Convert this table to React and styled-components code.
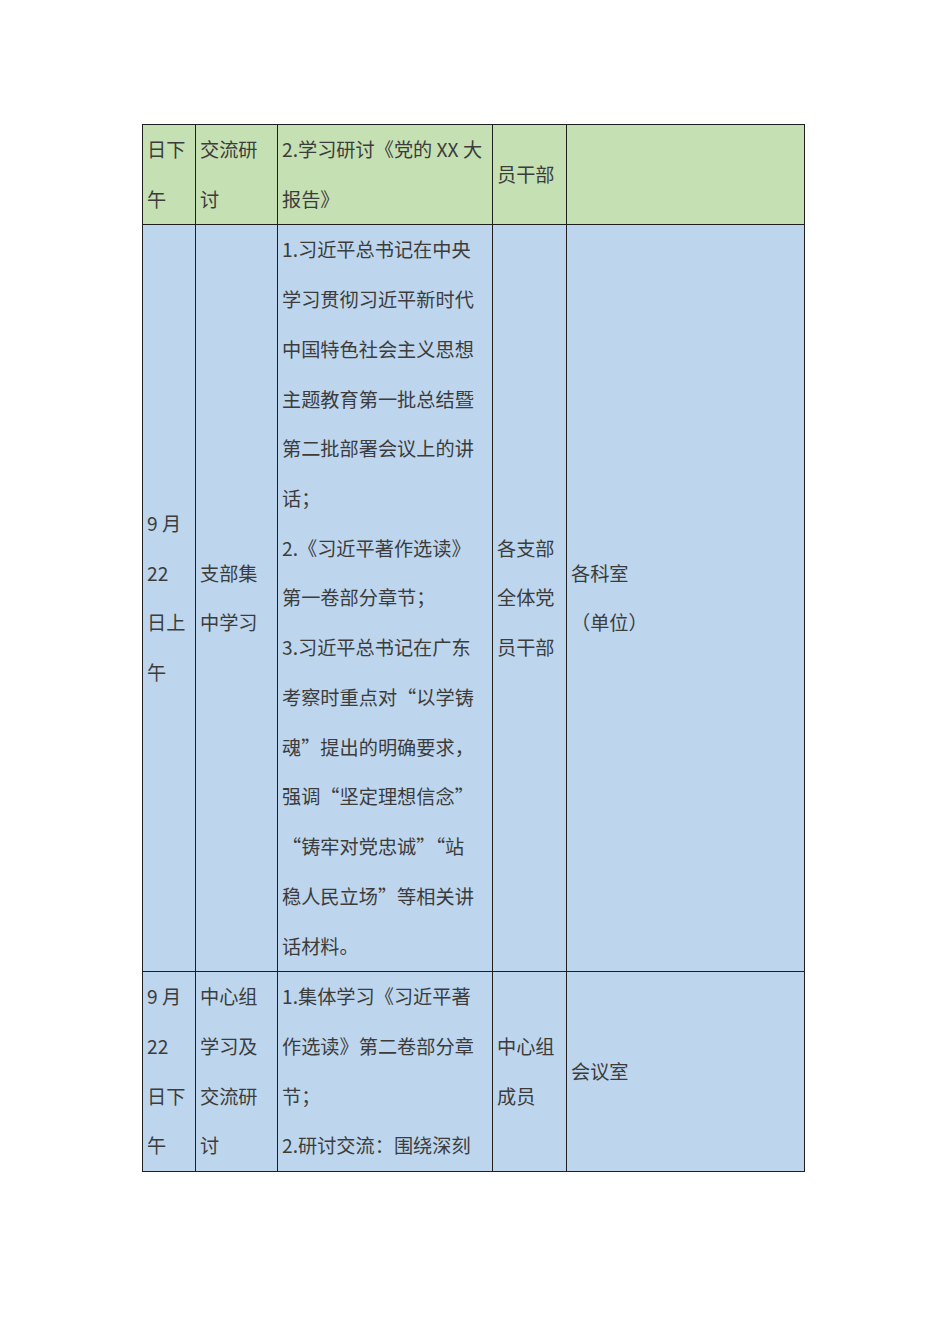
import styled, { createGlobalStyle } from 'styled-components';

const GlobalStyle = createGlobalStyle`
  html, body {
    margin: 0;
    padding: 0;
    background: #ffffff;
  }
  body {
    font-family: "Noto Sans CJK SC", "Noto Sans", sans-serif;
  }
`;

const Page = styled.div`
  width: 950px;
  min-height: 1344px;
  padding: 124px 0 0 142px;
  box-sizing: border-box;
`;

const Table = styled.table`
  border-collapse: collapse;
  table-layout: fixed;
  width: 662px;
  font-size: 19.2px;
  color: #3c3c3c;
`;

const Row = styled.tr`
  background: ${props => (props.$tone === 'green' ? '#c5e0b3' : '#bdd6ee')};
`;

const Cell = styled.td`
  border: 1px solid #1f1f1f;
  padding: 0 4px 0 4px;
  vertical-align: middle;
  line-height: 49.72px;
  white-space: nowrap;
  overflow: hidden;
`;

const Line = styled.div`
  height: 49.72px;
`;

const widths = [53, 82, 215, 74, 238];

const rows = [
  {
    tone: 'green',
    cells: [
      ['日下', '午'],
      ['交流研', '讨'],
      ['2.学习研讨《党的 XX 大', '报告》'],
      ['员干部'],
      [],
    ],
  },
  {
    tone: 'blue',
    cells: [
      ['9 月', '22', '日上', '午'],
      ['支部集', '中学习'],
      [
        '1.习近平总书记在中央',
        '学习贯彻习近平新时代',
        '中国特色社会主义思想',
        '主题教育第一批总结暨',
        '第二批部署会议上的讲',
        '话；',
        '2.《习近平著作选读》',
        '第一卷部分章节；',
        '3.习近平总书记在广东',
        '考察时重点对“以学铸',
        '魂”提出的明确要求，',
        '强调“坚定理想信念”',
        '“铸牢对党忠诚”“站',
        '稳人民立场”等相关讲',
        '话材料。',
      ],
      ['各支部', '全体党', '员干部'],
      ['各科室', '（单位）'],
    ],
  },
  {
    tone: 'blue',
    cells: [
      ['9 月', '22', '日下', '午'],
      ['中心组', '学习及', '交流研', '讨'],
      ['1.集体学习《习近平著', '作选读》第二卷部分章', '节；', '2.研讨交流：围绕深刻'],
      ['中心组', '成员'],
      ['会议室'],
    ],
  },
];

export default function App() {
  return (
    <>
      <GlobalStyle />
      <Page>
        <Table>
          <colgroup>
            {widths.map((w, i) => (
              <col key={i} style={{ width: w }} />
            ))}
          </colgroup>
          <tbody>
            {rows.map((row, r) => (
              <Row key={r} $tone={row.tone}>
                {row.cells.map((lines, c) => (
                  <Cell key={c}>
                    {lines.map((text, l) => (
                      <Line key={l}>{text}</Line>
                    ))}
                  </Cell>
                ))}
              </Row>
            ))}
          </tbody>
        </Table>
      </Page>
    </>
  );
}
